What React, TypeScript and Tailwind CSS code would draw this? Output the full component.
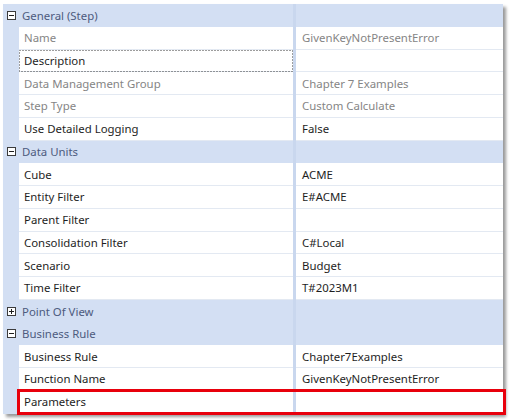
import React from "react";

type Row =
  | { kind: "cat"; label: string; open: boolean }
  | { kind: "prop"; name: string; value: string; readOnly?: boolean; focus?: boolean; mark?: boolean };

const rows: Row[] = [
  { kind: "cat", label: "General (Step)", open: true },
  { kind: "prop", name: "Name", value: "GivenKeyNotPresentError", readOnly: true },
  { kind: "prop", name: "Description", value: "", focus: true },
  { kind: "prop", name: "Data Management Group", value: "Chapter 7 Examples", readOnly: true },
  { kind: "prop", name: "Step Type", value: "Custom Calculate", readOnly: true },
  { kind: "prop", name: "Use Detailed Logging", value: "False" },
  { kind: "cat", label: "Data Units", open: true },
  { kind: "prop", name: "Cube", value: "ACME" },
  { kind: "prop", name: "Entity Filter", value: "E#ACME" },
  { kind: "prop", name: "Parent Filter", value: "" },
  { kind: "prop", name: "Consolidation Filter", value: "C#Local" },
  { kind: "prop", name: "Scenario", value: "Budget" },
  { kind: "prop", name: "Time Filter", value: "T#2023M1" },
  { kind: "cat", label: "Point Of View", open: false },
  { kind: "cat", label: "Business Rule", open: true },
  { kind: "prop", name: "Business Rule", value: "Chapter7Examples" },
  { kind: "prop", name: "Function Name", value: "GivenKeyNotPresentError" },
  { kind: "prop", name: "Parameters", value: "", mark: true },
];

const ToggleBox = ({ open }: { open: boolean }) => (
  <svg width="9" height="9" viewBox="0 0 9 9" className="block">
    <rect x="0.5" y="0.5" width="8" height="8" fill="#fff" stroke="#3c3c3c" />
    <path d="M2 4.5h5" stroke="#1e1e1e" />
    {!open && <path d="M4.5 2v5" stroke="#1e1e1e" />}
  </svg>
);

// dotted focus rectangle, drawn over the cell
const FocusRect = () => (
  <svg width="274" height="23" className="absolute left-0 top-0 pointer-events-none">
    <rect x="0.5" y="0.5" width="273" height="21" fill="none" stroke="#3a3a3a" strokeDasharray="1 2" />
  </svg>
);

export default function App() {
  return (
    <div
      className="w-[510px] h-[420px] bg-white pt-[4px] pl-[3px]"
      style={{ fontFamily: '"Noto Sans", "Open Sans", sans-serif' }}
    >
      <div className="w-[500px] bg-white shadow-[3px_3px_3px_rgba(0,0,0,0.4)] text-[11.4px]">
        {rows.map((r, i) =>
          r.kind === "cat" ? (
            <div key={i} className="flex h-[22.75px] bg-[#d3dff3]">
              <div className="w-4 flex items-center justify-center pl-[1px]">
                <ToggleBox open={r.open} />
              </div>
              <div className="w-[274px] flex items-center pl-[3px] text-[#4d5b7e]">{r.label}</div>
              <div className="w-[3px] bg-[#c9d7ee]" />
              <div className="flex-1" />
            </div>
          ) : (
            <div key={i} className="relative flex h-[22.75px]">
              <div className="w-4 bg-[#d3dff3]" />
              <div
                className={
                  "relative w-[274px] flex items-center pl-[5px] border-b border-[#e3e9f2] " +
                  (r.readOnly ? "text-[#858585]" : "text-[#1e1e1e]")
                }
              >
                {r.focus && <FocusRect />}
                {r.name}
              </div>
              <div className="w-[3px] bg-[#c9d7ee]" />
              <div
                className={
                  "flex-1 flex items-center pl-[6px] border-b border-[#e3e9f2] " +
                  (r.readOnly ? "text-[#858585]" : "text-[#1e1e1e]")
                }
              >
                {r.value}
              </div>
              {r.mark && (
                <div className="absolute left-[14px] -right-[3px] -top-[2px] -bottom-[1px] border-[3px] border-[#e8000c]" />
              )}
            </div>
          )
        )}
      </div>
    </div>
  );
}
